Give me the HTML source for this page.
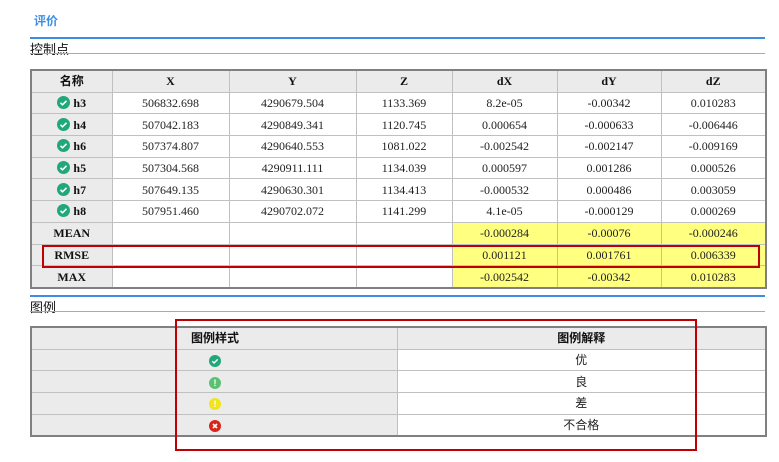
<!DOCTYPE html>
<html><head><meta charset="utf-8"><style>
body{margin:0;background:#fff;font-family:"Liberation Serif","Noto Serif CJK SC",serif;width:779px;height:462px;position:relative;overflow:hidden}
.abs{position:absolute}
table{border-collapse:collapse;position:absolute;table-layout:fixed}
td,th{border:1px solid #c0c0c0;text-align:center;font-size:12px;padding:0;height:20.7px;line-height:14px;color:#222}
th{background:#ebebeb;font-weight:bold;color:#111}
.t1{left:30px;top:69px;width:735px;border:2px solid #808080}
.y{background:#ffff80}
.ic{display:inline-block;width:13px;height:13px;border-radius:50%;vertical-align:-2px;margin-right:3px;position:relative}
.g{background:#20a87a}
.t2{left:30px;top:326px;width:735px;border:2px solid #808080}
.t2 td{font-family:"Liberation Sans","Noto Sans CJK SC",sans-serif}
.t2 .l{background:#ebebeb}
.sm{width:12px;height:12px;border-radius:50%;display:inline-block;vertical-align:middle;color:#fff;font:bold 9px/12px "Liberation Sans",sans-serif;text-align:center}
</style></head><body>
<div class="abs" style="left:34px;top:12px;font:bold 12px 'Liberation Sans','Noto Sans CJK SC',sans-serif;color:#3a8ee6">评价</div>
<div class="abs" style="left:30px;top:37px;width:735px;height:2px;background:#3a8ee6"></div>
<div class="abs" style="left:30px;top:39px;font:13px 'Liberation Sans','Noto Sans CJK SC',sans-serif;color:#111">控制点</div>
<div class="abs" style="left:30px;top:53px;width:735px;height:1px;background:#aaa"></div>
<table class="t1">
<colgroup><col style="width:81px"><col style="width:117px"><col style="width:127px"><col style="width:96px"><col style="width:105px"><col style="width:104px"><col style="width:105px"></colgroup>
<tr><th style="font-family:'Liberation Sans','Noto Sans CJK SC',sans-serif">名称</th><th>X</th><th>Y</th><th>Z</th><th>dX</th><th>dY</th><th>dZ</th></tr>
<tr><th><span class="ic g"><svg width="13" height="13" style="position:absolute;left:0;top:0"><path d="M3.5 6.8l2 2 4-4" stroke="#fff" stroke-width="1.6" fill="none"/></svg></span>h3</th><td>506832.698</td><td>4290679.504</td><td>1133.369</td><td>8.2e-05</td><td>-0.00342</td><td>0.010283</td></tr>
<tr><th><span class="ic g"><svg width="13" height="13" style="position:absolute;left:0;top:0"><path d="M3.5 6.8l2 2 4-4" stroke="#fff" stroke-width="1.6" fill="none"/></svg></span>h4</th><td>507042.183</td><td>4290849.341</td><td>1120.745</td><td>0.000654</td><td>-0.000633</td><td>-0.006446</td></tr>
<tr><th><span class="ic g"><svg width="13" height="13" style="position:absolute;left:0;top:0"><path d="M3.5 6.8l2 2 4-4" stroke="#fff" stroke-width="1.6" fill="none"/></svg></span>h6</th><td>507374.807</td><td>4290640.553</td><td>1081.022</td><td>-0.002542</td><td>-0.002147</td><td>-0.009169</td></tr>
<tr><th><span class="ic g"><svg width="13" height="13" style="position:absolute;left:0;top:0"><path d="M3.5 6.8l2 2 4-4" stroke="#fff" stroke-width="1.6" fill="none"/></svg></span>h5</th><td>507304.568</td><td>4290911.111</td><td>1134.039</td><td>0.000597</td><td>0.001286</td><td>0.000526</td></tr>
<tr><th><span class="ic g"><svg width="13" height="13" style="position:absolute;left:0;top:0"><path d="M3.5 6.8l2 2 4-4" stroke="#fff" stroke-width="1.6" fill="none"/></svg></span>h7</th><td>507649.135</td><td>4290630.301</td><td>1134.413</td><td>-0.000532</td><td>0.000486</td><td>0.003059</td></tr>
<tr><th><span class="ic g"><svg width="13" height="13" style="position:absolute;left:0;top:0"><path d="M3.5 6.8l2 2 4-4" stroke="#fff" stroke-width="1.6" fill="none"/></svg></span>h8</th><td>507951.460</td><td>4290702.072</td><td>1141.299</td><td>4.1e-05</td><td>-0.000129</td><td>0.000269</td></tr>
<tr><th>MEAN</th><td></td><td></td><td></td><td class="y">-0.000284</td><td class="y">-0.00076</td><td class="y">-0.000246</td></tr>
<tr><th>RMSE</th><td></td><td></td><td></td><td class="y">0.001121</td><td class="y">0.001761</td><td class="y">0.006339</td></tr>
<tr><th>MAX</th><td></td><td></td><td></td><td class="y">-0.002542</td><td class="y">-0.00342</td><td class="y">0.010283</td></tr>
</table>
<div class="abs" style="left:42px;top:245px;width:714px;height:19px;border:2px solid #c00000"></div>
<div class="abs" style="left:30px;top:295px;width:735px;height:2px;background:#3a8ee6"></div>
<div class="abs" style="left:30px;top:297px;font:13px 'Liberation Sans','Noto Sans CJK SC',sans-serif;color:#111">图例</div>
<div class="abs" style="left:30px;top:311px;width:735px;height:1px;background:#aaa"></div>
<table class="t2">
<colgroup><col style="width:366px"><col style="width:369px"></colgroup>
<tr><th style="font-family:'Liberation Sans','Noto Sans CJK SC',sans-serif;text-align:left;padding-left:159px">图例样式</th><th style="font-family:'Liberation Sans','Noto Sans CJK SC',sans-serif">图例解释</th></tr>
<tr><td class="l" style="text-align:left;padding-left:177px"><span class="sm" style="background:#20a87a"><svg width="12" height="12"><path d="M3.3 6.2l1.8 1.8 3.6-3.6" stroke="#fff" stroke-width="1.4" fill="none"/></svg></span></td><td>优</td></tr>
<tr><td class="l" style="text-align:left;padding-left:177px"><span class="sm" style="background:#5cc072">!</span></td><td>良</td></tr>
<tr><td class="l" style="text-align:left;padding-left:177px"><span class="sm" style="background:#f2e41c">!</span></td><td>差</td></tr>
<tr><td class="l" style="text-align:left;padding-left:177px"><span class="sm" style="background:#d9261c"><svg width="12" height="12"><path d="M4 4l4 4M8 4l-4 4" stroke="#fff" stroke-width="1.6"/></svg></span></td><td>不合格</td></tr>
</table>
<div class="abs" style="left:175px;top:319px;width:518px;height:128px;border:2px solid #c00000"></div>
</body></html>
